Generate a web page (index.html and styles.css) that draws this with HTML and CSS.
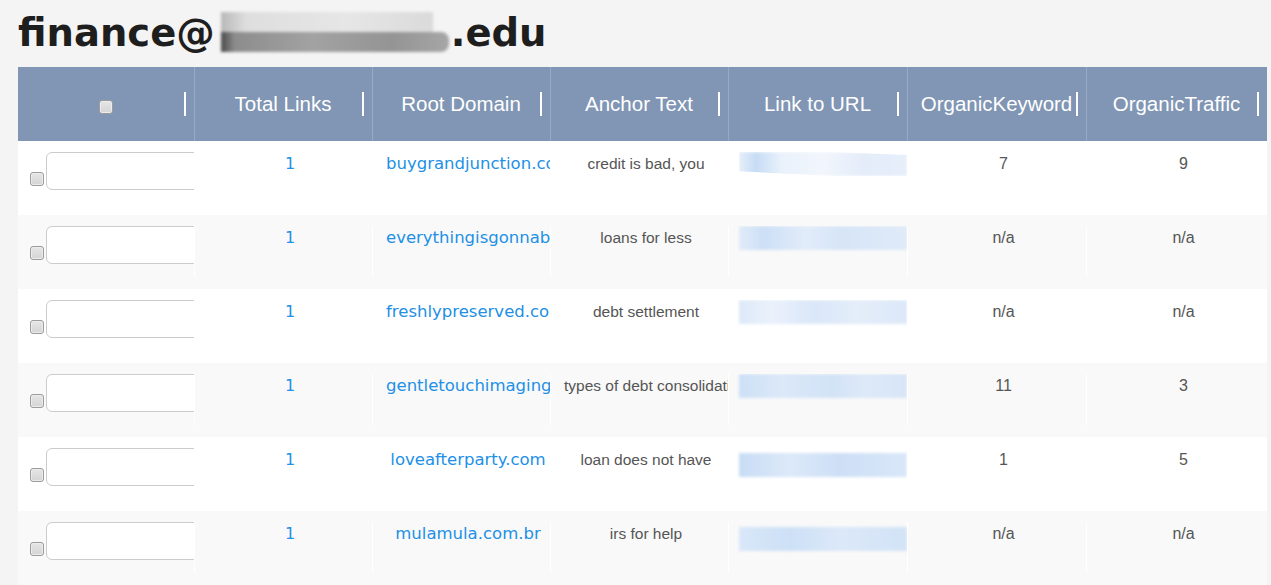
FILE: index.html
```html
<!DOCTYPE html>
<html>
<head>
<meta charset="utf-8">
<link rel="stylesheet" href="styles.css">
</head>
<body>
<h1 class="title">finance@<span class="redact"><span class="redact-top"></span><span class="redact-bottom"></span></span>.edu</h1>
<table class="grid">
  <colgroup>
    <col class="c1"><col class="c2"><col class="c3"><col class="c4"><col class="c5"><col class="c6"><col class="c7">
  </colgroup>
  <thead>
    <tr>
      <th class="first"><span class="cb"></span><span class="handle"></span></th>
      <th>Total Links<span class="handle"></span></th>
      <th>Root Domain<span class="handle"></span></th>
      <th>Anchor Text<span class="handle"></span></th>
      <th>Link to URL<span class="handle"></span></th>
      <th>OrganicKeyword<span class="handle"></span></th>
      <th>OrganicTraffic<span class="handle"></span></th>
    </tr>
  </thead>
  <tbody>
    <tr>
      <td><div class="sel"><span class="cb"></span><span class="box"></span></div></td>
      <td><div class="cell num link">1</div></td>
      <td><div class="cell dom">buygrandjunction.com</div></td>
      <td><div class="cell anchor">credit is bad, you</div></td>
      <td><div class="cell url"><span class="blur b1"></span></div></td>
      <td><div class="cell val">7</div></td>
      <td><div class="cell val">9</div></td>
    </tr>
    <tr>
      <td><div class="sel"><span class="cb"></span><span class="box"></span></div></td>
      <td><div class="cell num link">1</div></td>
      <td><div class="cell dom">everythingisgonnabeok.com</div></td>
      <td><div class="cell anchor">loans for less</div></td>
      <td><div class="cell url"><span class="blur b2"></span></div></td>
      <td><div class="cell val">n/a</div></td>
      <td><div class="cell val">n/a</div></td>
    </tr>
    <tr>
      <td><div class="sel"><span class="cb"></span><span class="box"></span></div></td>
      <td><div class="cell num link">1</div></td>
      <td><div class="cell dom">freshlypreserved.com</div></td>
      <td><div class="cell anchor">debt settlement</div></td>
      <td><div class="cell url"><span class="blur b3"></span></div></td>
      <td><div class="cell val">n/a</div></td>
      <td><div class="cell val">n/a</div></td>
    </tr>
    <tr>
      <td><div class="sel"><span class="cb"></span><span class="box"></span></div></td>
      <td><div class="cell num link">1</div></td>
      <td><div class="cell dom">gentletouchimaging.com</div></td>
      <td><div class="cell anchor">types of debt consolidation</div></td>
      <td><div class="cell url"><span class="blur b4"></span></div></td>
      <td><div class="cell val">11</div></td>
      <td><div class="cell val">3</div></td>
    </tr>
    <tr>
      <td><div class="sel"><span class="cb"></span><span class="box"></span></div></td>
      <td><div class="cell num link">1</div></td>
      <td><div class="cell dom">loveafterparty.com</div></td>
      <td><div class="cell anchor">loan does not have</div></td>
      <td><div class="cell url"><span class="blur b5"></span></div></td>
      <td><div class="cell val">1</div></td>
      <td><div class="cell val">5</div></td>
    </tr>
    <tr>
      <td><div class="sel"><span class="cb"></span><span class="box"></span></div></td>
      <td><div class="cell num link">1</div></td>
      <td><div class="cell dom">mulamula.com.br</div></td>
      <td><div class="cell anchor">irs for help</div></td>
      <td><div class="cell url"><span class="blur b6"></span></div></td>
      <td><div class="cell val">n/a</div></td>
      <td><div class="cell val">n/a</div></td>
    </tr>
  </tbody>
</table>
</body>
</html>
```
FILE: styles.css
```css
html, body {
  margin: 0;
  padding: 0;
  background: #f4f4f4;
  overflow: hidden;
}

.title {
  margin: 11px 0 12px 18px;
  font-family: "DejaVu Sans", Verdana, sans-serif;
  font-weight: bold;
  font-size: 38.5px;
  line-height: 44px;
  height: 44px;
  color: #1e1e1e;
  white-space: nowrap;
}

.redact {
  display: inline-block;
  width: 228px;
  height: 40px;
  margin: 0 2px 0 6px;
  vertical-align: -6px;
  filter: blur(1.8px);
}

.redact-top {
  display: block;
  width: 212px;
  height: 20px;
  background: linear-gradient(90deg, #b8b8b8 0%, #dedede 12%, #e6e6e6 60%, #dadada 100%);
}

.redact-bottom {
  display: block;
  width: 228px;
  height: 20px;
  border-radius: 0 8px 8px 0;
  background: linear-gradient(90deg, #4a4a4a 0%, #8c8c8c 6%, #a2a2a2 40%, #949494 75%, #a6a6a6 100%);
}

.grid {
  margin-left: 18px;
  width: 1249px;
  border-collapse: collapse;
  border-spacing: 0;
  table-layout: fixed;
}

.grid .c1 { width: 176px; }
.grid .c2 { width: 178px; }
.grid .c3 { width: 178px; }
.grid .c4 { width: 178px; }
.grid .c5 { width: 179px; }
.grid .c6 { width: 179px; }
.grid .c7 { width: 181px; }

.grid th {
  position: relative;
  height: 74px;
  padding: 0;
  background: #8096b4;
  color: #fff;
  font-family: "Liberation Sans", Arial, sans-serif;
  font-weight: normal;
  font-size: 20.5px;
  text-align: center;
  vertical-align: middle;
  white-space: nowrap;
  box-shadow: inset 1px 0 0 #97a9c3;
}

.grid th.first {
  box-shadow: none;
}

.handle {
  position: absolute;
  right: 8px;
  top: 25px;
  width: 2px;
  height: 24px;
  background: #fff;
}

.cb {
  display: inline-block;
  width: 12px;
  height: 12px;
  border: 1px solid #9c9c9c;
  border-radius: 3px;
  background: linear-gradient(180deg, #e6e6e6 0%, #d4d4d4 100%);
  box-shadow: inset 0 0 0 1px #ececec;
  vertical-align: middle;
}

.grid th .cb {
  margin-top: 2px;
}

.grid td {
  height: 74px;
  padding: 0;
  vertical-align: top;
}

.grid tbody tr:nth-child(odd) td {
  background: #ffffff;
}

.grid tbody tr:nth-child(even) td {
  background: #f9f9f9;
}

.sel {
  display: flex;
  align-items: flex-end;
  padding: 11px 0 0 12px;
  overflow: hidden;
}

.sel .cb {
  flex: none;
  margin: 0 2px 4px 0;
}

.box {
  flex: none;
  display: block;
  width: 170px;
  height: 38px;
  box-sizing: border-box;
  border: 1px solid #cccccc;
  border-radius: 6px;
  background: #fff;
}

.cell {
  margin-top: 11px;
  height: 51px;
  box-sizing: border-box;
  border-left: 1px solid #ffffff;
  padding: 2px 0 0 13px;
  text-align: center;
  white-space: nowrap;
  overflow: hidden;
  line-height: 20px;
}

.link, .dom {
  font-family: "DejaVu Sans", Verdana, sans-serif;
  font-size: 16px;
  color: #2190e6;
}

.dom {
  font-size: 16.5px;
}

.anchor {
  font-family: "Liberation Sans", Arial, sans-serif;
  font-size: 15.5px;
  color: #555555;
}

.val {
  font-family: "Liberation Sans", Arial, sans-serif;
  font-size: 16px;
  color: #555555;
}

.url {
  padding: 0;
  text-align: left;
}

.blur {
  display: block;
  width: 168px;
  height: 24px;
  margin-left: 10px;
  filter: blur(1.6px);
}

.b1 {
  background: linear-gradient(90deg, #e6eefa 0%, #c6dcf5 10%, #e9f1fb 25%, #f2f6fc 50%, #e3ecf9 75%, #e6eefa 100%);
  clip-path: polygon(0 0, 55% 0, 100% 12%, 100% 100%, 55% 100%, 0 80%);
}

.b2 {
  background: linear-gradient(90deg, #e0ebf8 0%, #cddff6 15%, #e2ecf9 40%, #d6e5f7 60%, #dfeaf8 100%);
}

.b3 {
  background: linear-gradient(90deg, #dde9f8 0%, #eaf1fb 20%, #d9e7f8 45%, #e4edf9 70%, #dce8f8 100%);
}

.b4 {
  background: linear-gradient(90deg, #cde0f6 0%, #dbe8f8 25%, #d2e3f6 55%, #dde9f8 75%, #d6e5f7 100%);
}

.b5 {
  margin-top: 5px;
  background: linear-gradient(90deg, #c8dcf5 0%, #dce9f8 30%, #cddff6 60%, #d9e7f8 100%);
}

.b6 {
  margin-top: 5px;
  background: linear-gradient(90deg, #d9e7f8 0%, #cde0f6 30%, #dbe8f8 60%, #d2e3f6 100%);
}
```
